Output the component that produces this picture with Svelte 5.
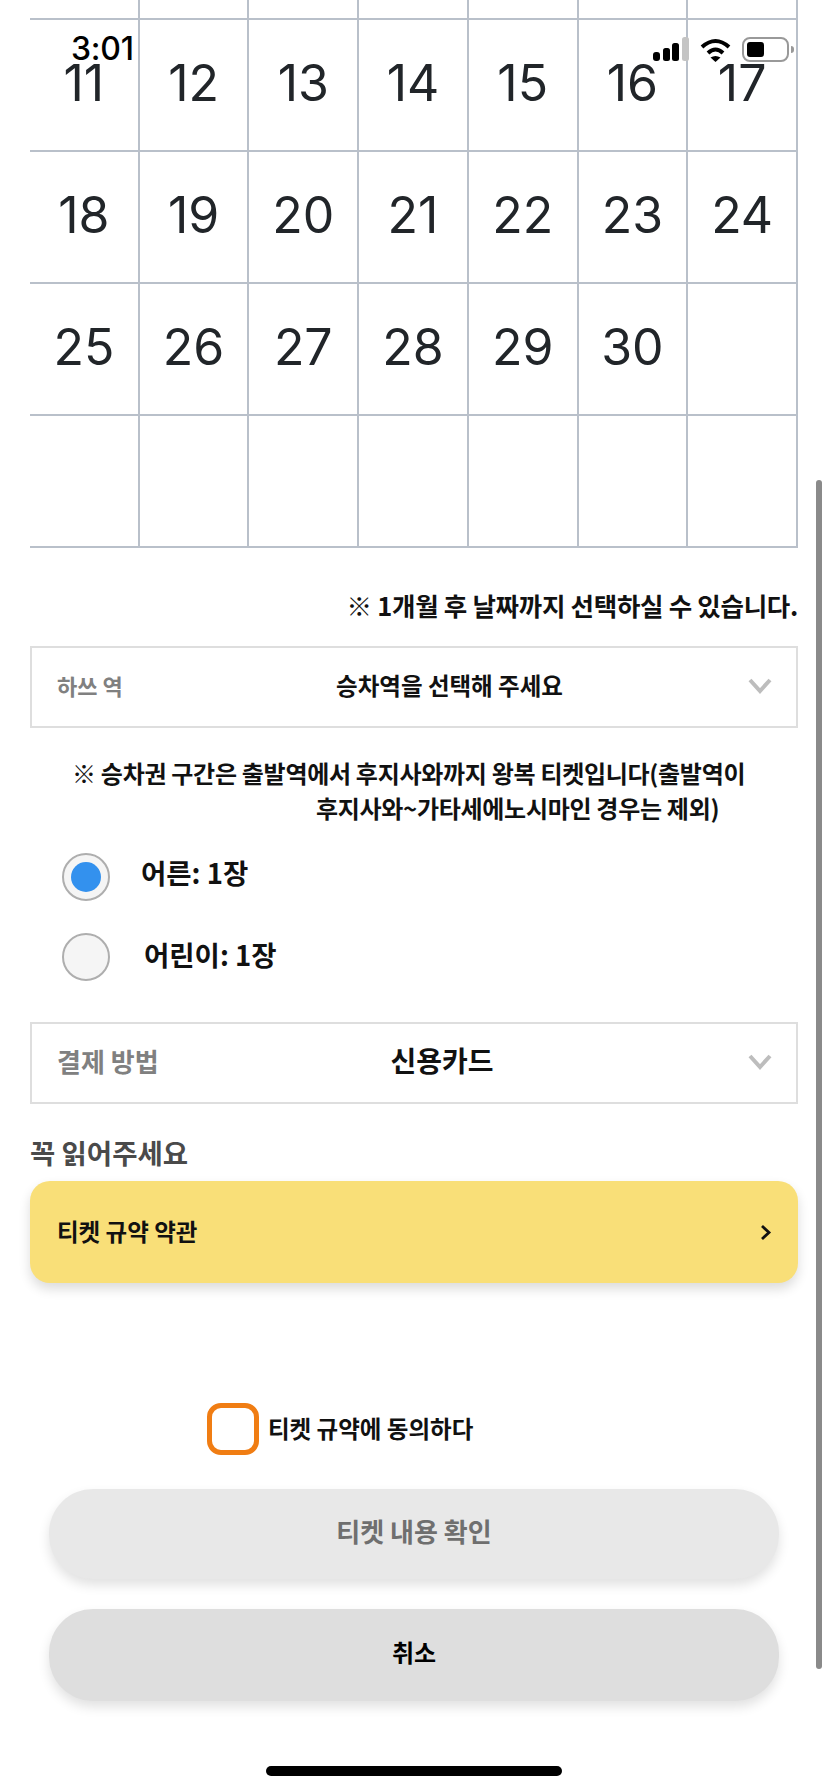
<script>
  // the calendar starts scrolled: the first row is cut off by the top of the page
  const topRow = Array(7).fill('');
  const days = [
    11, 12, 13, 14, 15, 16, 17,
    18, 19, 20, 21, 22, 23, 24,
    25, 26, 27, 28, 29, 30, '',
    '', '', '', '', '', '', ''
  ];
</script>

<div class="screen">
  <div class="page">
    <div class="calendar">
      {#each topRow as _}
        <div class="cell cut"></div>
      {/each}
      {#each days as day}
        <div class="cell">{day}</div>
      {/each}
    </div>

    <p class="limit">※ 1개월 후 날짜까지 선택하실 수 있습니다.</p>

    <div class="select">
      <span class="select-label">하쓰 역</span>
      <span class="select-value station">승차역을 선택해 주세요</span>
      <svg class="caret" width="24" height="16" viewBox="0 0 24 16"><path d="M2 2l10 11L22 2" fill="none" stroke="#bdbdbd" stroke-width="4" /></svg>
    </div>

    <p class="notice">
      <span class="notice-one">※ 승차권 구간은 출발역에서 후지사와까지 왕복 티켓입니다(출발역이</span>
      <span class="notice-two">후지사와~가타세에노시마인 경우는 제외)</span>
    </p>

    <div class="radio-row">
      <span class="radio on"><span class="dot"></span></span>
      <span class="radio-text">어른: 1장</span>
    </div>
    <div class="radio-row second">
      <span class="radio"></span>
      <span class="radio-text kid">어린이: 1장</span>
    </div>

    <div class="select payment">
      <span class="select-label">결제 방법</span>
      <span class="select-value card">신용카드</span>
      <svg class="caret" width="24" height="16" viewBox="0 0 24 16"><path d="M2 2l10 11L22 2" fill="none" stroke="#bdbdbd" stroke-width="4" /></svg>
    </div>

    <h3 class="read-title">꼭 읽어주세요</h3>
    <div class="terms">
      <span class="terms-text">티켓 규약 약관</span>
      <svg width="12" height="17" viewBox="0 0 12 17"><path d="M2 2l7 6.500L2 15" fill="none" stroke="#111" stroke-width="2.800" /></svg>
    </div>

    <div class="agree">
      <span class="check"></span>
      <span class="agree-text">티켓 규약에 동의하다</span>
    </div>

    <button class="btn confirm">티켓 내용 확인</button>
    <button class="btn cancel">취소</button>

    <div class="home-bar"></div>
  </div>

  <!-- iOS status bar sits over the scrolled page -->
  <div class="status">
    <span class="time">3:01</span>
    <svg class="signal" width="36" height="24" viewBox="0 0 36 24">
      <rect x="0" y="15" width="7" height="9" rx="3" fill="#000" />
      <rect x="10" y="11" width="7" height="13" rx="2.500" fill="#000" />
      <rect x="19" y="6" width="7" height="18" rx="2.500" fill="#000" />
      <rect x="29" y="0" width="7" height="24" rx="2.500" fill="#c4c4c4" />
    </svg>
    <svg class="wifi" width="31" height="24" viewBox="0 0 31 24">
      <path d="M2 9Q15.500 -3 29 9" fill="none" stroke="#000" stroke-width="4" />
      <path d="M8 15Q15.500 8 23 15" fill="none" stroke="#000" stroke-width="4" />
      <path d="M10.500 19.500Q15.500 16.500 20.500 19.500L15.500 24Z" fill="#000" />
    </svg>
    <div class="battery"><span class="level"></span></div>
    <span class="nub"></span>
  </div>

  <div class="scrollbar"></div>
</div>

<style>
  :global(body) {
    margin: 0;
    background: #fff;
  }

  .screen {
    position: relative;
    width: 828px;
    height: 1792px;
    overflow: hidden;
    background: #fff;
    font-family: "Noto Sans CJK KR", "Noto Sans", sans-serif;
    color: #111;
  }

  .page {
    display: flex;
    flex-direction: column;
    padding: 0 30px;
  }

  .calendar {
    display: grid;
    grid-template-columns: repeat(7, 1fr);
    grid-template-rows: 20px repeat(4, 132px);
    font-family: Inter, "Liberation Sans", sans-serif;
    font-size: 50px;
    color: #212529;
  }

  .cell {
    display: flex;
    align-items: center;
    justify-content: center;
    padding-bottom: 4px;
    box-sizing: border-box;
    border-right: 2px solid #b9c0ca;
    border-bottom: 2px solid #b9c0ca;
  }

  .cell.cut {
    padding: 0;
  }

  p,
  h3 {
    margin: 0;
  }

  .limit {
    margin-top: 39px;
    text-align: right;
    font-size: 25.500px;
    line-height: 36px;
    font-weight: 700;
    letter-spacing: -0.3px;
    white-space: nowrap;
  }

  .select {
    position: relative;
    display: flex;
    align-items: center;
    justify-content: space-between;
    height: 82px;
    margin-top: 23px;
    padding: 0 24px 4px 25px;
    box-sizing: border-box;
    border: 2px solid #dedede;
  }

  .select-label {
    color: #808080;
    font-size: 22px;
    font-weight: 700;
  }

  .select-value {
    position: absolute;
    left: 0;
    right: 0;
    text-align: center;
    font-weight: 700;
    font-size: 23.500px;
  }

  .select-value.station {
    padding-left: 71px;
  }

  .select-value.card {
    font-size: 28px;
    padding-left: 56px;
  }

  .caret {
    margin-top: 1px;
  }

  .notice {
    margin-top: 27px;
    font-size: 24px;
    line-height: 35px;
    font-weight: 700;
    letter-spacing: -0.3px;
  }

  .notice span {
    display: block;
    white-space: nowrap;
  }

  .notice-one {
    padding-left: 42px;
  }

  .notice-two {
    padding-left: 286px;
  }

  .radio-row {
    display: flex;
    align-items: center;
    gap: 31px;
    margin-top: 28px;
    padding-left: 32px;
  }

  .radio-row.second {
    margin-top: 32px;
  }

  .radio {
    display: flex;
    align-items: center;
    justify-content: center;
    width: 48px;
    height: 48px;
    box-sizing: border-box;
    border: 2px solid #aeaeae;
    border-radius: 50%;
    background: #f5f5f5;
  }

  .dot {
    width: 30px;
    height: 30px;
    border-radius: 50%;
    background: #3391ee;
  }

  .radio-text {
    margin-top: -11px;
    font-size: 27.500px;
    font-weight: 700;
  }

  .radio-text.kid {
    margin-top: -7px;
    margin-left: 3px;
  }

  .payment {
    margin-top: 41px;
    padding-bottom: 6px;
  }

  .payment .select-label {
    font-size: 26px;
  }

  .payment .caret {
    margin-top: 3px;
  }

  .read-title {
    margin-top: 28px;
    font-size: 27.500px;
    line-height: 40px;
    font-weight: 700;
    color: #4a4a4a;
  }

  .terms {
    display: flex;
    align-items: center;
    justify-content: space-between;
    height: 102px;
    margin-top: 9px;
    padding: 0 26px 0 27px;
    border-radius: 20px;
    background: #f9df78;
    box-shadow: 0 6px 12px rgba(0, 0, 0, 0.14);
    font-size: 23.500px;
    font-weight: 700;
  }

  .terms-text {
    margin-top: -2px;
  }

  .agree {
    display: flex;
    align-items: center;
    gap: 9px;
    margin-top: 120px;
    padding-left: 177px;
    font-size: 23.500px;
    font-weight: 700;
  }

  .agree-text {
    margin-top: -2px;
  }

  .check {
    width: 52px;
    height: 52px;
    box-sizing: border-box;
    border: 5px solid #f07d13;
    border-radius: 14px;
  }

  .btn {
    display: block;
    width: 730px;
    height: 90px;
    margin: 34px 0 0 19px;
    padding: 0 0 8px;
    border: 0;
    border-radius: 44px;
    font-family: inherit;
    font-weight: 700;
    box-shadow: 0 6px 12px rgba(0, 0, 0, 0.12);
  }

  .confirm {
    background: #e8e8e8;
    color: #6f6f6f;
    font-size: 26px;
  }

  .cancel {
    height: 92px;
    margin-top: 30px;
    background: #dedede;
    color: #000;
    font-size: 24px;
  }

  .home-bar {
    width: 296px;
    height: 10px;
    margin: 65px 0 0 236px;
    border-radius: 5px;
    background: #000;
  }

  .status {
    position: absolute;
    top: 0;
    left: 0;
    width: 100%;
    height: 70px;
  }

  .time {
    position: absolute;
    left: 71px;
    top: 30px;
    font-family: Inter, "Liberation Sans", sans-serif;
    font-size: 32px;
    line-height: 38px;
    font-weight: 500;
    letter-spacing: -0.2px;
    color: #000;
  }

  .signal {
    position: absolute;
    left: 653px;
    top: 37px;
  }

  .wifi {
    position: absolute;
    left: 700px;
    top: 38px;
  }

  .battery {
    position: absolute;
    left: 742px;
    top: 37px;
    width: 47px;
    height: 25px;
    box-sizing: border-box;
    padding: 3px;
    border: 2px solid #999;
    border-radius: 8px;
  }

  .level {
    display: block;
    width: 17px;
    height: 100%;
    border-radius: 3px;
    background: #000;
  }

  .nub {
    position: absolute;
    left: 791px;
    top: 46px;
    width: 3px;
    height: 7px;
    border-radius: 0 3px 3px 0;
    background: #999;
  }

  .scrollbar {
    position: absolute;
    left: 816px;
    top: 480px;
    width: 6px;
    height: 1189px;
    border-radius: 3px;
    background: #8a8a8a;
  }
</style>
